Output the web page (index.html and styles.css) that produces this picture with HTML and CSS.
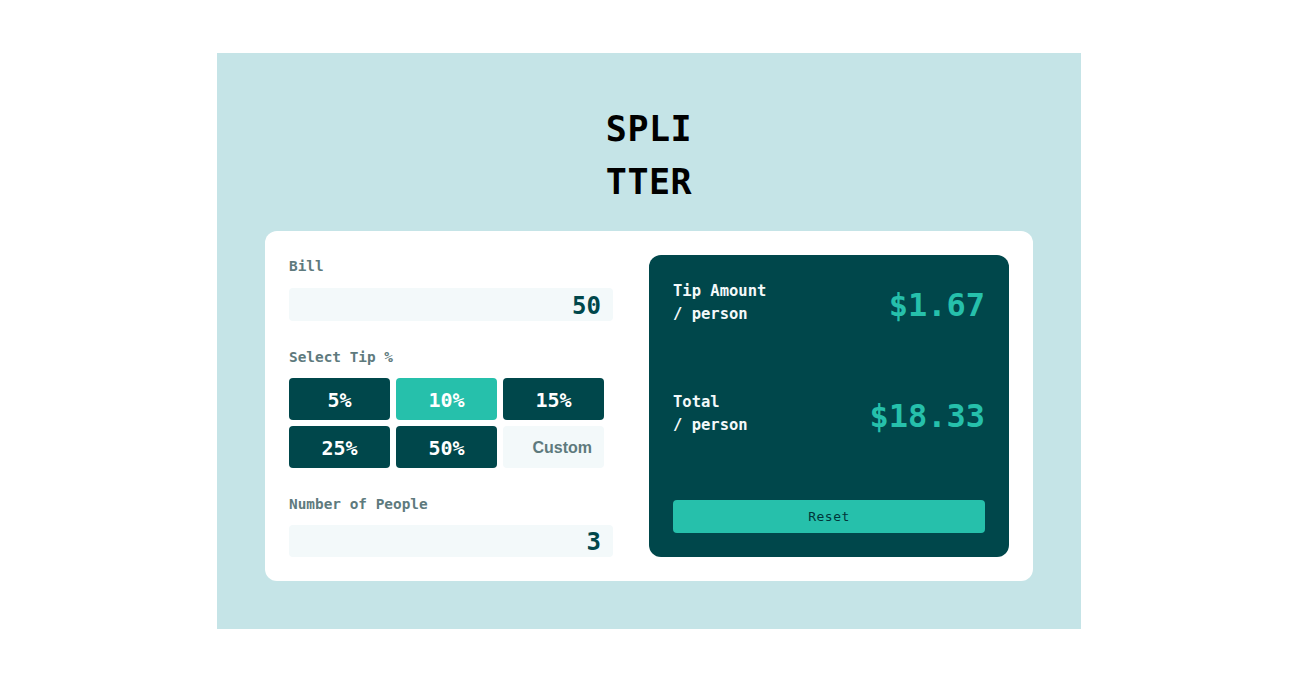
FILE: index.html
```html
<!DOCTYPE html>
<html lang="en">
<head>
<meta charset="utf-8">
<title>Splitter</title>
<link rel="stylesheet" href="styles.css">
</head>
<body>
<main class="app">
  <h1 class="logo">SPLITTER</h1>
  <section class="card">
    <div class="inputs">
      <div class="field">
        <div class="label">Bill</div>
        <div class="box">50</div>
      </div>
      <div class="field">
        <div class="label">Select Tip %</div>
        <div class="tips">
          <div class="tip">5%</div>
          <div class="tip active">10%</div>
          <div class="tip">15%</div>
          <div class="tip">25%</div>
          <div class="tip">50%</div>
          <div class="tip custom">Custom</div>
        </div>
      </div>
      <div class="field">
        <div class="label">Number of People</div>
        <div class="box">3</div>
      </div>
    </div>
    <div class="result">
      <div class="row">
        <div class="rlabel">Tip Amount<br>/ person</div>
        <div class="value">$1.67</div>
      </div>
      <div class="row second">
        <div class="rlabel">Total<br>/ person</div>
        <div class="value">$18.33</div>
      </div>
      <div class="reset">Reset</div>
    </div>
  </section>
</main>
</body>
</html>
```
FILE: styles.css
```css
* { box-sizing: border-box; }
body {
  margin: 0;
  padding-left: 7px;
  background: #ffffff;
  font-family: "DejaVu Sans Mono", "Liberation Mono", monospace;
}
.app {
  width: 864px;
  margin: 53px auto 0;
  background: #c5e4e7;
  padding: 50px 48px 48px;
}
.logo {
  margin: 0 auto 22px;
  width: 100px;
  word-break: break-all;
  text-align: center;
  font-size: 35px;
  line-height: 53px;
  font-weight: bold;
  color: #000;
  letter-spacing: 0.5px;
}
.card {
  background: #fff;
  border-radius: 12px;
  padding: 24px;
  display: flex;
  gap: 36px;
}
.inputs {
  width: 324px;
  display: flex;
  flex-direction: column;
  gap: 25px;
}
.label {
  font-size: 14.4px;
  font-weight: bold;
  color: #5e7a7d;
  line-height: 20px;
  padding-top: 1px;
  height: 20px;
  margin-bottom: 12px;
}
.field:first-child .label { margin-bottom: 13px; }
.box {
  height: 33px;
  background: #f3f9fa;
  border-radius: 4px;
  text-align: right;
  padding-right: 12px;
  font-size: 24px;
  font-weight: bold;
  line-height: 36px;
  color: #00474b;
}
.field:last-child .box { height: 32px; line-height: 35px; }
.tips {
  width: 315px;
  display: grid;
  grid-template-columns: repeat(3, 101px);
  grid-auto-rows: 42px;
  gap: 6px;
}
.tip {
  background: #00474b;
  color: #fff;
  border-radius: 4px;
  font-size: 20px;
  font-weight: bold;
  display: flex;
  align-items: center;
  justify-content: center;
  padding-top: 1px;
}
.tip.active { background: #26c0ab; }
.tip.custom {
  background: #f3f9fa;
  color: #5e7a7d;
  font-family: "Liberation Sans", Arial, sans-serif;
  font-size: 16px;
  justify-content: flex-end;
  padding-right: 12px;
}
.result {
  width: 360px;
  background: #00474b;
  border-radius: 12px;
  padding: 24px;
  display: flex;
  flex-direction: column;
}
.row {
  height: 46px;
  display: flex;
  justify-content: space-between;
  align-items: center;
}
.row.second { margin-top: 65px; }
.rlabel {
  font-size: 15.5px;
  font-weight: bold;
  line-height: 23px;
  padding-top: 1px;
  color: #f3f9fa;
}
.value {
  font-size: 32px;
  font-weight: bold;
  color: #26c0ab;
  line-height: 40px;
  padding-top: 5px;
}
.reset {
  margin-top: 64px;
  height: 33px;
  background: #26c0ab;
  border-radius: 4px;
  color: #00363a;
  font-size: 13px;
  line-height: 34px;
  text-align: center;
  letter-spacing: 0.5px;
}
```
